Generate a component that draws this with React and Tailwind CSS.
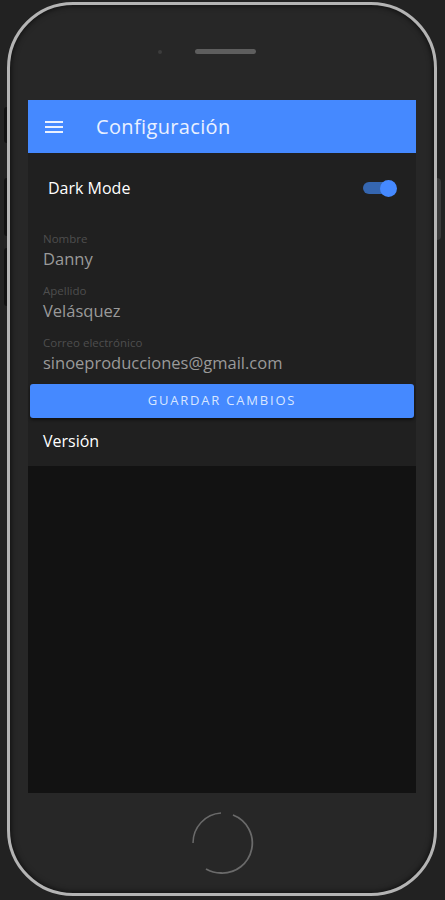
import { useState } from 'react';

const fields = [
  { label: 'Nombre', value: 'Danny' },
  { label: 'Apellido', value: 'Velásquez' },
  { label: 'Correo electrónico', value: 'sinoeproducciones@gmail.com' },
];

const App = () => {
  const [dark, setDark] = useState(true);

  return (
    <div
      className="w-[445px] h-[900px] bg-[#222222] pl-[7px] pt-[2px] overflow-hidden"
      style={{ fontFamily: '"Open Sans", "Liberation Sans", sans-serif' }}
    >
      {/* Phone frame */}
      <div className="relative w-[430px] h-[894px] rounded-[66px] border-[3px] border-[#b4b4b4] bg-[#272727] shadow-[inset_0_0_6px_rgba(0,0,0,0.8)] flex flex-col">
        {/* side buttons */}
        <div className="absolute -left-[6px] top-[102px] w-[3px] h-[36px] bg-[#111111] rounded-l-sm" />
        <div className="absolute -left-[6px] top-[173px] w-[3px] h-[58px] bg-[#111111] rounded-l-sm" />
        <div className="absolute -left-[6px] top-[243px] w-[3px] h-[58px] bg-[#111111] rounded-l-sm" />
        <div className="absolute -right-[7px] top-[173px] w-[4px] h-[62px] bg-[#3a3a3a] rounded-r-sm" />

        {/* top: camera + speaker */}
        <div className="h-[95px] flex items-start pt-[44px] pl-[148px] gap-[33px]">
          <div className="w-[4px] h-[4px] mt-[1px] rounded-full bg-[#3c3c3c]" />
          <div className="w-[61px] h-[5px] rounded-full bg-[#5e5e5e]" />
        </div>

        {/* Screen */}
        <div className="mx-[18px] h-[693px] bg-[#121212] flex flex-col">
          <div className="h-[53px] bg-[#4589ff] flex items-center px-[17px]">
            <svg width="20" height="14" viewBox="0 0 20 14" className="shrink-0">
              <rect x="0" y="1" width="18" height="2" fill="#eaf1ff" />
              <rect x="0" y="6" width="18" height="2" fill="#eaf1ff" />
              <rect x="0" y="11" width="18" height="2" fill="#eaf1ff" />
            </svg>
            <span className="ml-[31px] text-[20px] text-[#eaf1ff] tracking-[0.35px]">Configuración</span>
          </div>

          <div className="bg-[#202020] h-[313px] flex flex-col">
            <div className="h-[70px] flex items-center justify-between pl-[20px] pr-[19px]">
              <span className="text-[16px] text-white">Dark Mode</span>
              <button
                onClick={() => setDark(!dark)}
                className="relative w-[34px] h-[18px] flex items-center"
              >
                <span className="absolute left-0 w-[30px] h-[12px] rounded-full bg-[#3566b0]" />
                <span
                  className={`absolute w-[17px] h-[17px] rounded-full bg-[#4589ff] ${dark ? 'left-[17px]' : 'left-0'}`}
                />
              </button>
            </div>

            <div className="px-[15px] mt-[8px] flex flex-col gap-[12px]">
              {fields.map((f) => (
                <div key={f.label} className="flex flex-col">
                  <span className="text-[11.5px] leading-[15px] text-[#4e4e4e]">{f.label}</span>
                  <span className="text-[16.5px] leading-[24px] text-[#9a9a9a] mt-[1px]">{f.value}</span>
                </div>
              ))}
            </div>

            <button className="mx-[2px] mt-[9px] h-[34px] shrink-0 rounded-[3px] bg-[#4589ff] text-[13px] font-medium tracking-[1.8px] text-[#d8e6ff] shadow-[0_2px_3px_rgba(0,0,0,0.5)]">
              GUARDAR CAMBIOS
            </button>

            <div className="flex-1 flex items-center px-[15px] pb-[2px]">
              <span className="text-[16px] text-white">Versión</span>
            </div>
          </div>
        </div>

        {/* bottom: home button */}
        <div className="flex-1 flex items-center justify-center pr-[2px]">
          <svg width="66" height="66" viewBox="0 0 66 66">
            <path d="M5 33 A 30 30 0 0 1 33 3" stroke="#6a6a6a" strokeWidth="1.5" fill="none" />
            <path d="M45 5 A 30 30 0 0 1 33 63 A 30 30 0 0 1 18 59" stroke="#6a6a6a" strokeWidth="1.8" fill="none" />
          </svg>
        </div>
      </div>
    </div>
  );
};

export default App;
